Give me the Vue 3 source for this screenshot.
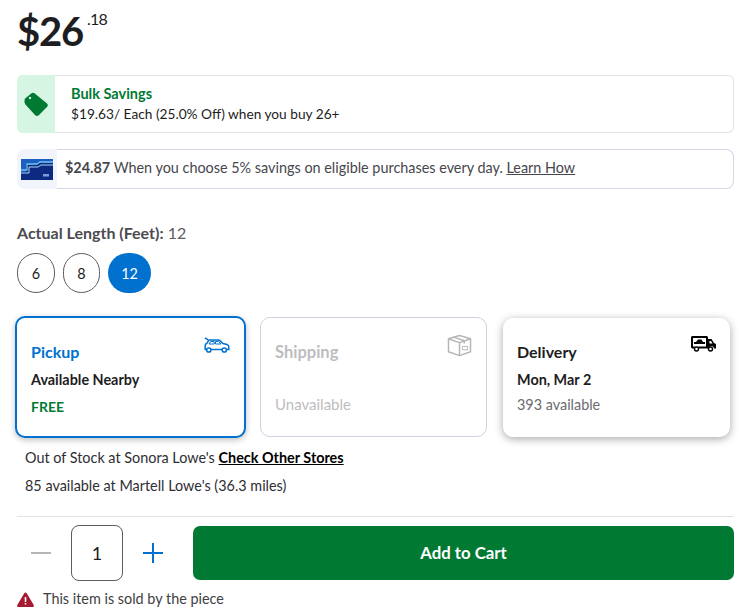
<script setup>
const sizes = [
  { label: '6', kind: 'wide' },
  { label: '8', kind: 'narrow' },
  { label: '12', kind: 'active' }
]
</script>

<template>
  <main class="page">
    <div class="price"><span class="whole">$26</span><span class="cents">.18</span></div>

    <section class="bulk">
      <div class="bulk-icon">
        <svg width="26" height="26" viewBox="0 0 26 26">
          <path fill="#007a33" fill-rule="evenodd" d="M1.8 7.8L8.2 2.4Q10 1.2 11.8 2.4L24 12.6Q25.6 14 24.4 15.6L15.8 24.2Q14 25.6 12.2 24.2L2.4 13.4Q.8 10.5 1.8 7.8zM7 5.8a1.2 1.2 0 1 0 .01 0z"/>
        </svg>
      </div>
      <div class="bulk-text">
        <div class="bulk-title">Bulk Savings</div>
        <div class="bulk-desc">$19.63/ Each (25.0% Off) when you buy 26+</div>
      </div>
    </section>

    <section class="card-offer">
      <div class="card-thumb">
        <svg width="32" height="21" viewBox="0 0 32 21">
          <rect width="32" height="21" fill="#0b2a80"/>
          <path d="M0 13h5V6h10l3-2h14V0H0z" fill="#1c5fc0"/>
          <path d="M0 11h6V5h10l3-2h13" fill="none" stroke="#6fc0f0" stroke-width="1.3"/>
          <path d="M0 14h8V8h9l3-2h12" fill="none" stroke="#a8d8f7" stroke-width="1"/>
          <rect x="22" y="15" width="6" height="2.5" fill="#7f9bd6"/>
        </svg>
      </div>
      <div class="card-text">
        <strong>$24.87</strong> When you choose 5% savings on eligible purchases every day. <a class="plain-link">Learn How</a>
      </div>
    </section>

    <div class="length-label"><strong>Actual Length (Feet):</strong> 12</div>
    <div class="swatches">
      <button v-for="s in sizes" :key="s.label" class="swatch" :class="s.kind">{{ s.label }}</button>
    </div>

    <div class="methods">
      <div class="method pickup">
        <svg class="m-icon car-icon" width="26" height="16" viewBox="0 0 26 16" fill="none" stroke="#0071ce" stroke-width="1.5">
          <path d="M1 .8l3 2"/>
          <path d="M2.5 12.5H1.2V8.5c0-1 .6-1.6 1.6-2L5 3h9.5c.6 0 1 .2 1.4.6L19 6.5l4 1c1.3.4 1.8 1.2 1.8 2.4v2.6h-2"/>
          <path d="M7 12.5h11"/>
          <circle cx="4.8" cy="13" r="2.1"/>
          <circle cx="20.3" cy="13" r="2.1"/>
          <path d="M5 7l1.7-2.5h3.5V7zM11.500 4.5h3L17 7h-5.5z" stroke-width="1"/>
        </svg>
        <div class="m-title blue">Pickup</div>
        <div class="m-line strong-line">Available Nearby</div>
        <div class="m-line free">FREE</div>
      </div>

      <div class="method shipping">
        <svg class="m-icon ship-icon" width="25" height="23" viewBox="0 0 26 24" fill="none" stroke="#b5b5b8" stroke-width="1.5" stroke-linejoin="round">
          <path d="M13 1.5L24.5 5v13.5L13 22.5 1.5 18.5V5z"/>
          <path d="M1.5 5L13 9l11.500-4M13 9v13.5"/>
          <path d="M7 3.2l11 3.8v3"/>
          <rect x="16" y="13" width="5.5" height="3.5" stroke-width="1"/>
        </svg>
        <div class="m-title grey">Shipping</div>
        <div class="m-line unavailable">Unavailable</div>
      </div>

      <div class="method delivery">
        <svg class="m-icon" width="25" height="16" viewBox="0 0 25 16">
          <path fill="#000" d="M1.5 0h14c.8 0 1.5.7 1.5 1.5V3h3.5l2.5 4 2 1v4.500h-2a2.5 2.5 0 0 0-5 0H8a2.5 2.5 0 0 0-5 0H1.5C.7 12.5 0 11.8 0 11V1.5C0 .7.7 0 1.5 0z"/>
          <path fill="#fff" d="M2 2h13v8.5H2zM18.5 5H20l1.500 2.5h-3z"/>
          <path fill="#000" d="M5 6l2-2.500h3.500L12 6h2v2H3V6z"/>
          <circle cx="5.5" cy="13" r="2" fill="#fff" stroke="#000" stroke-width="1.4"/>
          <circle cx="19.5" cy="13" r="2" fill="#fff" stroke="#000" stroke-width="1.4"/>
        </svg>
        <div class="m-title">Delivery</div>
        <div class="m-line strong-line">Mon, Mar 2</div>
        <div class="m-line muted">393 available</div>
      </div>
    </div>

    <div class="store-lines">
      <p>Out of Stock at Sonora Lowe's <a class="check">Check Other Stores</a></p>
      <p>85 available at Martell Lowe's (36.3 miles)</p>
    </div>

    <hr class="divider" />

    <div class="buy-row">
      <div class="stepper">
        <span class="minus"></span>
        <div class="qty">1</div>
        <svg class="plus" width="20" height="20" viewBox="0 0 20 20"><path d="M10 0v20M0 10h20" stroke="#0071ce" stroke-width="2"/></svg>
      </div>
      <button class="add">Add to Cart</button>
    </div>

    <div class="warning">
      <svg width="17" height="15" viewBox="0 0 17 15">
        <path fill="#a6192e" d="M8.5.5c.5 0 .9.3 1.200.8l7 11.700c.5.900-.1 2-1.200 2h-14c-1.100 0-1.700-1.100-1.200-2l7-11.700c.3-.5.700-.8 1.200-.8z"/>
        <path fill="#fff" d="M7.700 5h1.600v5H7.700zM7.700 11h1.600v1.600H7.700z"/>
      </svg>
      <span>This item is sold by the piece</span>
    </div>
  </main>
</template>

<style>
html, body { margin: 0; background: #fff; }
</style>

<style scoped>
.page {
  width: 743px;
  height: 610px;
  box-sizing: border-box;
  padding: 0 9px 0 17px;
  overflow: hidden;
  font-family: Lato, "Liberation Sans", sans-serif;
  color: #1d1d22;
  font-size: 14.4px;
}
.price { height: 75px; display: flex; align-items: flex-start; }
.whole { font-size: 40px; font-weight: 700; line-height: 50px; margin-top: 6px; letter-spacing: -1.2px; }
.cents { font-size: 16px; font-weight: 400; line-height: 22px; margin: 8px 0 0 4px; letter-spacing: -0.8px; }

.bulk {
  height: 58px;
  box-sizing: border-box;
  border: 1px solid #e2e2e6;
  border-left: 0;
  border-radius: 6px;
  display: flex;
  align-items: center;
}
.bulk-icon {
  width: 38px;
  height: 58px;
  background: #d6f6e3;
  border-radius: 6px 0 0 6px;
  display: flex;
  align-items: center;
  justify-content: center;
}
.bulk-text { padding-left: 16px; line-height: 20px; margin-top: -1px; }
.bulk-title { color: #007a33; font-weight: 700; font-size: 14.5px; }
.bulk-desc { font-size: 13.7px; }

.card-offer {
  margin-top: 16px;
  height: 40px;
  display: flex;
  align-items: center;
}
.card-thumb {
  width: 40px;
  height: 40px;
  background: #f2f4fc;
  border-radius: 8px 0 0 8px;
  display: flex;
  align-items: center;
  justify-content: center;
}
.card-text {
  flex: 1;
  height: 40px;
  box-sizing: border-box;
  border: 1px solid #d5d6e6;
  border-left: 0;
  border-radius: 0 8px 8px 0;
  padding-left: 8px;
  line-height: 35px;
  color: #46464c;
}
.card-text strong { font-weight: 700; }
.plain-link { text-decoration: underline; }

.length-label { margin-top: 33px; font-size: 16px; line-height: 22px; color: #5c5c61; }
.length-label strong { font-weight: 700; color: #4b4b50; }

.swatches { margin-top: 9px; display: flex; gap: 8px; }
.swatch {
  height: 40px;
  padding: 0;
  border: 1px solid #5c5c61;
  border-radius: 20px;
  background: #fff;
  color: #1d1d22;
  font: inherit;
}
.wide { width: 38px; }
.narrow { width: 37px; }
.active { width: 43px; border: 0; background: #0071ce; color: #fff; }

.methods { margin: 23px 4px 0 -2px; display: flex; align-items: center; }
.method {
  position: relative;
  box-sizing: border-box;
  background: #fff;
  border-radius: 10px;
}
.pickup {
  width: 231px;
  height: 122px;
  border: 2px solid #0071ce;
  padding: 24px 14px 0;
  box-shadow: 0 2px 6px rgba(0, 0, 0, 0.25);
}
.shipping {
  width: 227px;
  height: 120px;
  margin-left: 14px;
  border: 1px solid #cfd0e0;
  padding: 24px 14px 0;
}
.delivery {
  width: 227px;
  height: 119px;
  margin-left: 16px;
  padding: 24px 14px 0;
  box-shadow: 0 2px 8px rgba(0, 0, 0, 0.35);
}
.m-icon { position: absolute; top: 18px; right: 14px; }
.car-icon { top: 19px; }
.ship-icon { top: 16px; }
.m-title { font-size: 16px; font-weight: 700; line-height: 20px; }
.blue { color: #0071ce; }
.grey { color: #bdbdc0; font-size: 16.5px; }
.m-line { line-height: 18px; }
.strong-line { font-weight: 700; margin-top: 9px; }
.free { color: #007a33; font-weight: 700; font-size: 14px; margin-top: 9px; }
.unavailable { color: #bdbdc0; font-weight: 400; font-size: 15px; margin-top: 33px; }
.muted { color: #6b6b70; margin-top: 7px; font-size: 14.4px; }

.store-lines { margin: 11px 0 0 8px; color: #2e2e33; }
.store-lines p { margin: 0 0 10px; line-height: 18px; }
.check { color: #000; font-weight: 700; text-decoration: underline; }

.divider { margin: 21px 0 0; border: 0; border-top: 1px solid #e2e2e6; }

.buy-row { margin-top: 8px; display: flex; align-items: center; }
.stepper { display: flex; align-items: center; width: 176px; }
.minus { width: 20px; height: 2px; margin-left: 14px; background: #b5b5b8; }
.qty {
  width: 52px;
  height: 56px;
  margin-left: 20px;
  box-sizing: border-box;
  border: 1px solid #5c5c61;
  border-radius: 8px;
  display: flex;
  align-items: center;
  justify-content: center;
  font-size: 18px;
}
.plus { margin-left: 20px; }
.add {
  width: 541px;
  height: 54px;
  padding: 0 0 2px;
  border: 0;
  border-radius: 7px;
  background: #007a33;
  color: #fff;
  font: inherit;
  font-size: 16.8px;
  font-weight: 700;
}
.warning { margin-top: 9px; display: flex; align-items: center; gap: 9px; line-height: 18px; color: #3f3f44; }
</style>
